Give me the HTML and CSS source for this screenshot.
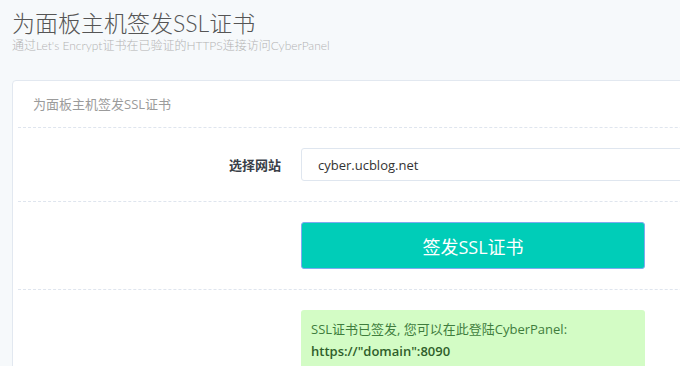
FILE: index.html
```html
<!DOCTYPE html>
<html lang="zh-CN">
<head>
    <meta charset="UTF-8">
    <meta name="viewport" content="width=device-width, initial-scale=1.0">
    <title>为面板主机签发SSL证书</title>
    <link rel="stylesheet" href="styles.css">
</head>
<body>
    <div class="page-head">
        <h2 class="page-title">为面板主机签发SSL证书</h2>
        <p class="page-sub">通过Let's Encrypt证书在已验证的HTTPS连接访问CyberPanel</p>
    </div>

    <div class="panel">
        <div class="panel-title">为面板主机签发SSL证书</div>

        <div class="form-row">
            <label class="form-label" for="site">选择网站</label>
            <div class="form-control">
                <select id="site" class="select">
                    <option>cyber.ucblog.net</option>
                </select>
            </div>
        </div>

        <div class="form-row">
            <div class="form-label"></div>
            <div class="form-control">
                <button class="issue-button">签发SSL证书</button>
            </div>
        </div>

        <div class="form-row last">
            <div class="form-label"></div>
            <div class="form-control">
                <div class="alert-success">
                    SSL证书已签发, 您可以在此登陆CyberPanel:<br>
                    <strong>https://"domain":8090</strong>
                </div>
            </div>
        </div>
    </div>
</body>
</html>
```

FILE: styles.css
```css
html, body {
    overflow: hidden;
}
body {
    margin: 0;
    background-color: #f6f9fb;
    font-family: "Open Sans", "Noto Sans CJK SC", sans-serif;
    font-size: 13px;
    color: #333;
}
.page-head {
    padding: 8px 12px 0;
    height: 72px;
}
.page-title {
    margin: 0;
    font-family: Lato, "Noto Sans CJK SC", sans-serif;
    font-weight: 300;
    font-size: 23px;
    line-height: 30px;
    color: #555;
}
.page-sub {
    margin: 0;
    font-family: Lato, "Noto Sans CJK SC", sans-serif;
    font-weight: 300;
    font-size: 12px;
    line-height: 16px;
    color: #b3b3b3;
}
.panel {
    margin-left: 12px;
    width: 760px;
    padding-left: 5px;
    background-color: #fff;
    border: 1px solid #e2e8f0;
    border-radius: 4px;
}
.panel-title {
    padding: 14px 15px;
    line-height: 18px;
    font-size: 13px;
    color: #9b9b9b;
    border-bottom: 1px dashed #dfe5ee;
}
.form-row {
    display: grid;
    grid-template-columns: 263px 1fr;
    column-gap: 20px;
    align-items: center;
    padding: 20px 0;
    border-bottom: 1px dashed #dfe5ee;
}
.form-row:first-of-type {
    padding: 21px 0;
}
.form-row.last {
    border-bottom: none;
}
.form-label {
    text-align: right;
    font-weight: bold;
    color: #3a3f48;
}
.select {
    display: block;
    width: 100%;
    height: 33px;
    padding: 0 16px;
    border: 1px solid #dfe6ef;
    border-radius: 3px;
    background-color: #fff;
    font-family: inherit;
    font-size: 13px;
    color: #333;
    appearance: none;
}
.issue-button {
    display: block;
    width: 344px;
    height: 47px;
    border: 1px solid #7eaaf0;
    border-radius: 3px;
    background-color: #00cdb8;
    color: #fff;
    font-family: inherit;
    font-size: 18px;
    cursor: pointer;
}
.alert-success {
    width: 318px;
    padding: 8px 16px 14px 10px;
    border-radius: 3px;
    background-color: #d3fcc5;
    color: #3f7d3d;
    line-height: 22px;
}
.alert-success strong {
    font-weight: 600;
    color: #2f5f2b;
}
```
